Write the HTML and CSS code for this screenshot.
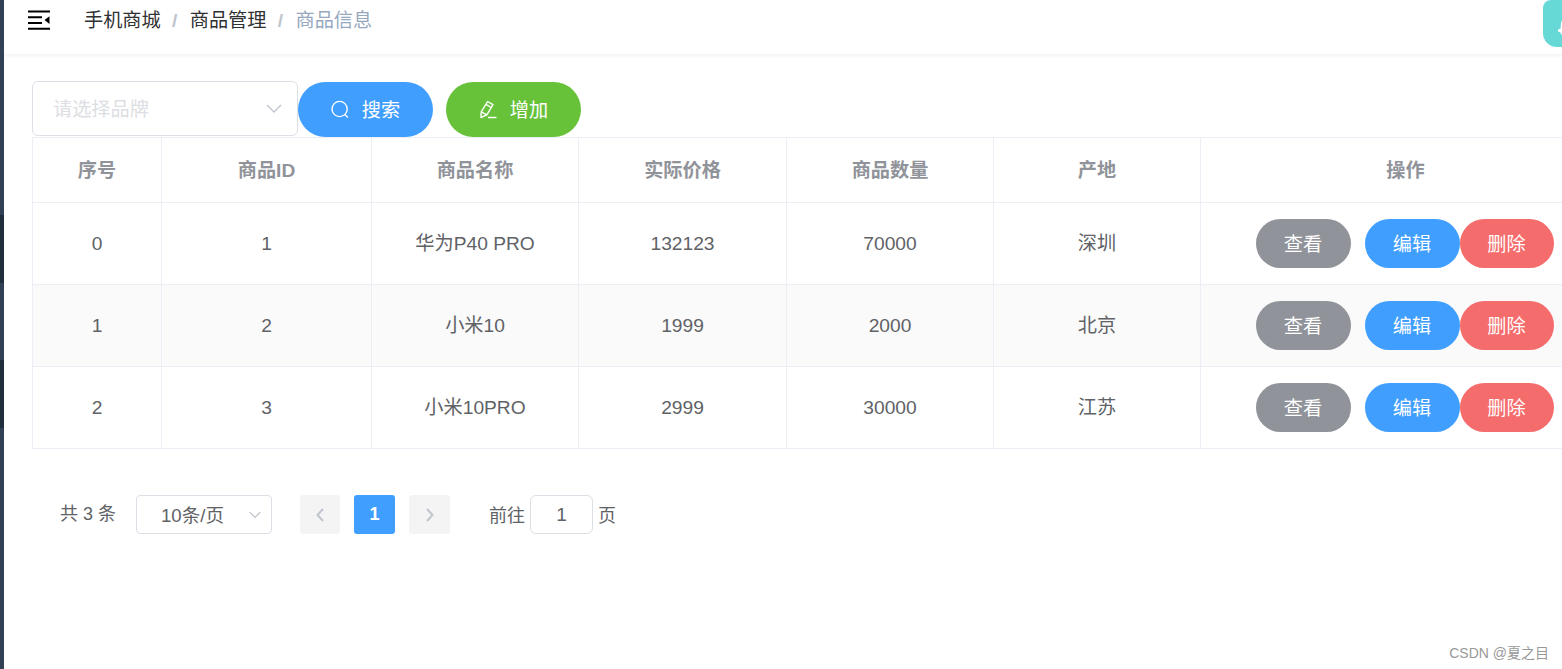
FILE: index.html
```html
<!DOCTYPE html>
<html lang="zh-CN">
<head>
    <meta charset="utf-8">
    <meta name="viewport" content="width=device-width, initial-scale=1">
    <title>商品信息</title>
    <link rel="stylesheet" href="styles.css">
</head>
<body>
    <div class="sidebar">
        <div class="sub-menu first"></div>
        <div class="sub-menu second"></div>
    </div>
    <div class="main">
        <div class="header">
            <svg class="fold" width="22" height="20" viewBox="0 0 22 20">
                <path d="M0 1.5H22M0 7.2H14M0 13H14M0 18.7H22" stroke="#000" stroke-width="2" fill="none"/>
                <path d="M21.5 6.2V14L16.5 10.1Z" fill="#000"/>
            </svg>
            <div class="breadcrumb">
                <span>手机商城</span><i>/</i><span>商品管理</span><i>/</i><span class="current">商品信息</span>
            </div>
        </div>
        <div class="content">
            <div class="toolbar">
                <div class="select">
                    <span>请选择品牌</span>
                    <svg width="16" height="10" viewBox="0 0 16 10"><path d="M1 1L8 8L15 1" stroke="#c0c4cc" stroke-width="1.3" fill="none"/></svg>
                </div>
                <button class="btn search">
                    <svg width="20" height="20" viewBox="0 0 20 20"><g stroke="#fff" stroke-width="1.4" fill="none"><circle cx="9.6" cy="9" r="7.6"/><path d="M14.8 14.5L18 17.5"/></g></svg>
                    <span>搜索</span>
                </button>
                <button class="btn add">
                    <svg width="20" height="20" viewBox="0 0 20 20"><g stroke="#fff" stroke-width="1.4" fill="none" stroke-linejoin="round"><path d="M9.6 1.5L15 4.6L8.8 14.8L3 17.5L3.2 11.8Z"/><path d="M7.9 4.4L13.2 7.5M3.2 11.8L8.8 14.8M10 17.5H18.5"/></g></svg>
                    <span>增加</span>
                </button>
            </div>
            <table>
                <colgroup>
                    <col class="col-index"><col class="col-id"><col class="col-name"><col class="col-price"><col class="col-count"><col class="col-place"><col class="col-action">
                </colgroup>
                <thead>
                    <tr>
                        <th>序号</th>
                        <th>商品ID</th>
                        <th>商品名称</th>
                        <th>实际价格</th>
                        <th>商品数量</th>
                        <th>产地</th>
                        <th>操作</th>
                    </tr>
                </thead>
                <tbody>
                    <tr>
                        <td>0</td>
                        <td>1</td>
                        <td class="text">华为P40 PRO</td>
                        <td>132123</td>
                        <td>70000</td>
                        <td class="text">深圳</td>
                        <td><div class="actions"><button class="view">查看</button><button class="edit">编辑</button><button class="delete">删除</button></div></td>
                    </tr>
                    <tr class="striped">
                        <td>1</td>
                        <td>2</td>
                        <td class="text">小米10</td>
                        <td>1999</td>
                        <td>2000</td>
                        <td class="text">北京</td>
                        <td><div class="actions"><button class="view">查看</button><button class="edit">编辑</button><button class="delete">删除</button></div></td>
                    </tr>
                    <tr>
                        <td>2</td>
                        <td>3</td>
                        <td class="text">小米10PRO</td>
                        <td>2999</td>
                        <td>30000</td>
                        <td class="text">江苏</td>
                        <td><div class="actions"><button class="view">查看</button><button class="edit">编辑</button><button class="delete">删除</button></div></td>
                    </tr>
                </tbody>
            </table>
            <div class="pagination">
                <span class="total">共 3 条</span>
                <div class="sizes">
                    <span>10条/页</span>
                    <svg width="12" height="8" viewBox="0 0 12 8"><path d="M0.6 1L6 6.4L11.4 1" stroke="#c0c4cc" stroke-width="1.1" fill="none"/></svg>
                </div>
                <button class="pager prev"><svg width="10" height="14" viewBox="0 0 10 14"><path d="M8 1L2.5 7L8 13" stroke="#c0c4cc" stroke-width="2" fill="none"/></svg></button>
                <button class="pager active">1</button>
                <button class="pager next"><svg width="10" height="14" viewBox="0 0 10 14"><path d="M2 1L7.5 7L2 13" stroke="#c0c4cc" stroke-width="2" fill="none"/></svg></button>
                <span class="jump">前往</span>
                <input class="page-input" type="text" value="1">
                <span class="jump-unit">页</span>
            </div>
        </div>
    </div>
    <div class="float-badge">
        <svg width="5" height="16" viewBox="0 0 5 16"><path d="M5 0C3 2 2.7 4 2.7 9.5L0 10.5V12.5L2.5 13.5L3 15.5L5 15Z" fill="#fff"/></svg>
    </div>
    <div class="watermark">CSDN @夏之目</div>
</body>
</html>
```
FILE: styles.css
```css
* {
    box-sizing: border-box;
}

body {
    position: relative;
    display: flex;
    height: 100vh;
    margin: 0;
    overflow: hidden;
    background-color: #fff;
    color: #606266;
    font-family: "Liberation Sans", "Noto Sans CJK SC", sans-serif;
    font-size: 19.2px;
}

button {
    padding: 0;
    border: none;
    font-family: inherit;
    font-size: 19.2px;
    color: #fff;
    cursor: pointer;
}

svg {
    display: block;
    flex: none;
}

.sidebar {
    flex: none;
    width: 4px;
    padding-top: 215px;
    background-color: #304156;
}

.sub-menu {
    height: 68px;
    background-color: #1f2d3d;
}

.sub-menu.second {
    margin-top: 77px;
}

.main {
    flex: 1;
    min-width: 0;
    overflow: hidden;
}

.header {
    display: flex;
    align-items: flex-start;
    height: 54px;
    padding-left: 24px;
    box-shadow: 0 1px 5px rgba(0, 21, 41, 0.08);
}

.fold {
    margin-top: 10px;
}

.breadcrumb {
    display: flex;
    margin-left: 34px;
    line-height: 42px;
    color: #303133;
}

.breadcrumb i {
    width: 29px;
    padding-right: 1px;
    text-align: center;
    font-style: normal;
    font-weight: bold;
    color: #c0c4cc;
}

.breadcrumb .current {
    color: #97a8be;
}

.content {
    padding: 27px 0 0 28px;
}

.toolbar {
    display: flex;
    height: 56px;
}

.select {
    display: flex;
    align-items: center;
    justify-content: space-between;
    width: 266px;
    height: 55px;
    padding: 0 15px 0 20px;
    border: 1px solid #dcdfe6;
    border-radius: 6px;
    color: #dcdee3;
}

.select span,
.btn span {
    padding-bottom: 2px;
}

.btn {
    display: flex;
    align-items: center;
    justify-content: center;
    gap: 12px;
    width: 135px;
    height: 55px;
    margin-top: 1px;
    padding-right: 1px;
    border-radius: 28px;
}

.search {
    background-color: #409eff;
}

.add {
    margin-left: 13px;
    background-color: #67c23a;
}

table {
    width: 1579px;
    table-layout: fixed;
    border-collapse: separate;
    border-spacing: 0;
    border-top: 1px solid #ebeef5;
    border-left: 1px solid #ebeef5;
}

.col-index {
    width: 129px;
}

.col-id {
    width: 210px;
}

.col-name,
.col-count,
.col-place {
    width: 207px;
}

.col-price {
    width: 208px;
}

th,
td {
    padding: 0;
    border-right: 1px solid #ebeef5;
    border-bottom: 1px solid #ebeef5;
    text-align: center;
}

th {
    height: 65px;
    padding-bottom: 2px;
    color: #909399;
}

td {
    height: 82px;
}

td.text {
    padding-bottom: 3px;
}

.striped td {
    background-color: #fafafa;
}

.actions {
    display: flex;
    justify-content: center;
    padding-right: 2px;
}

.actions button {
    width: 95px;
    height: 49px;
    padding-bottom: 2px;
    border-radius: 25px;
}

.actions .view {
    margin-right: 14px;
    background-color: #909399;
}

.actions .edit {
    background-color: #409eff;
}

.actions .delete {
    width: 94px;
    background-color: #f56c6c;
}

.pagination {
    display: flex;
    align-items: center;
    height: 39px;
    margin-top: 46px;
    padding-left: 28px;
    font-size: 18px;
}

.total {
    width: 76px;
    padding-bottom: 5px;
    white-space: nowrap;
}

.sizes {
    display: flex;
    align-items: center;
    justify-content: space-between;
    width: 136px;
    height: 39px;
    margin-right: 28px;
    padding: 0 10px 0 24px;
    border: 1px solid #dcdfe6;
    border-radius: 4px;
}

.sizes span {
    padding-bottom: 3px;
    font-size: 18.6px;
}

.pager {
    display: flex;
    align-items: center;
    justify-content: center;
    width: 41px;
    height: 39px;
    border-radius: 3px;
    background-color: #f4f4f5;
    font-size: 18px;
    font-weight: bold;
}

.pager.prev {
    width: 40px;
}

.pager.active {
    margin: 0 14px;
    background-color: #409eff;
}

.jump {
    margin-left: 39px;
}

.jump,
.jump-unit {
    padding-bottom: 2px;
}

.page-input {
    width: 63px;
    height: 39px;
    margin: 0 5px;
    border: 1px solid #dcdfe6;
    border-radius: 6px;
    text-align: center;
    font-family: inherit;
    font-size: 19.2px;
    color: #606266;
}

.float-badge {
    position: absolute;
    top: 0;
    right: 0;
    width: 19px;
    height: 47px;
    padding: 19px 0 0 15px;
    border-radius: 8px 0 0 14px;
    background-color: #66d9d6;
    overflow: hidden;
}

.watermark {
    position: absolute;
    right: 13px;
    bottom: 6px;
    font-size: 14px;
    line-height: 20px;
    color: #999;
}
```
